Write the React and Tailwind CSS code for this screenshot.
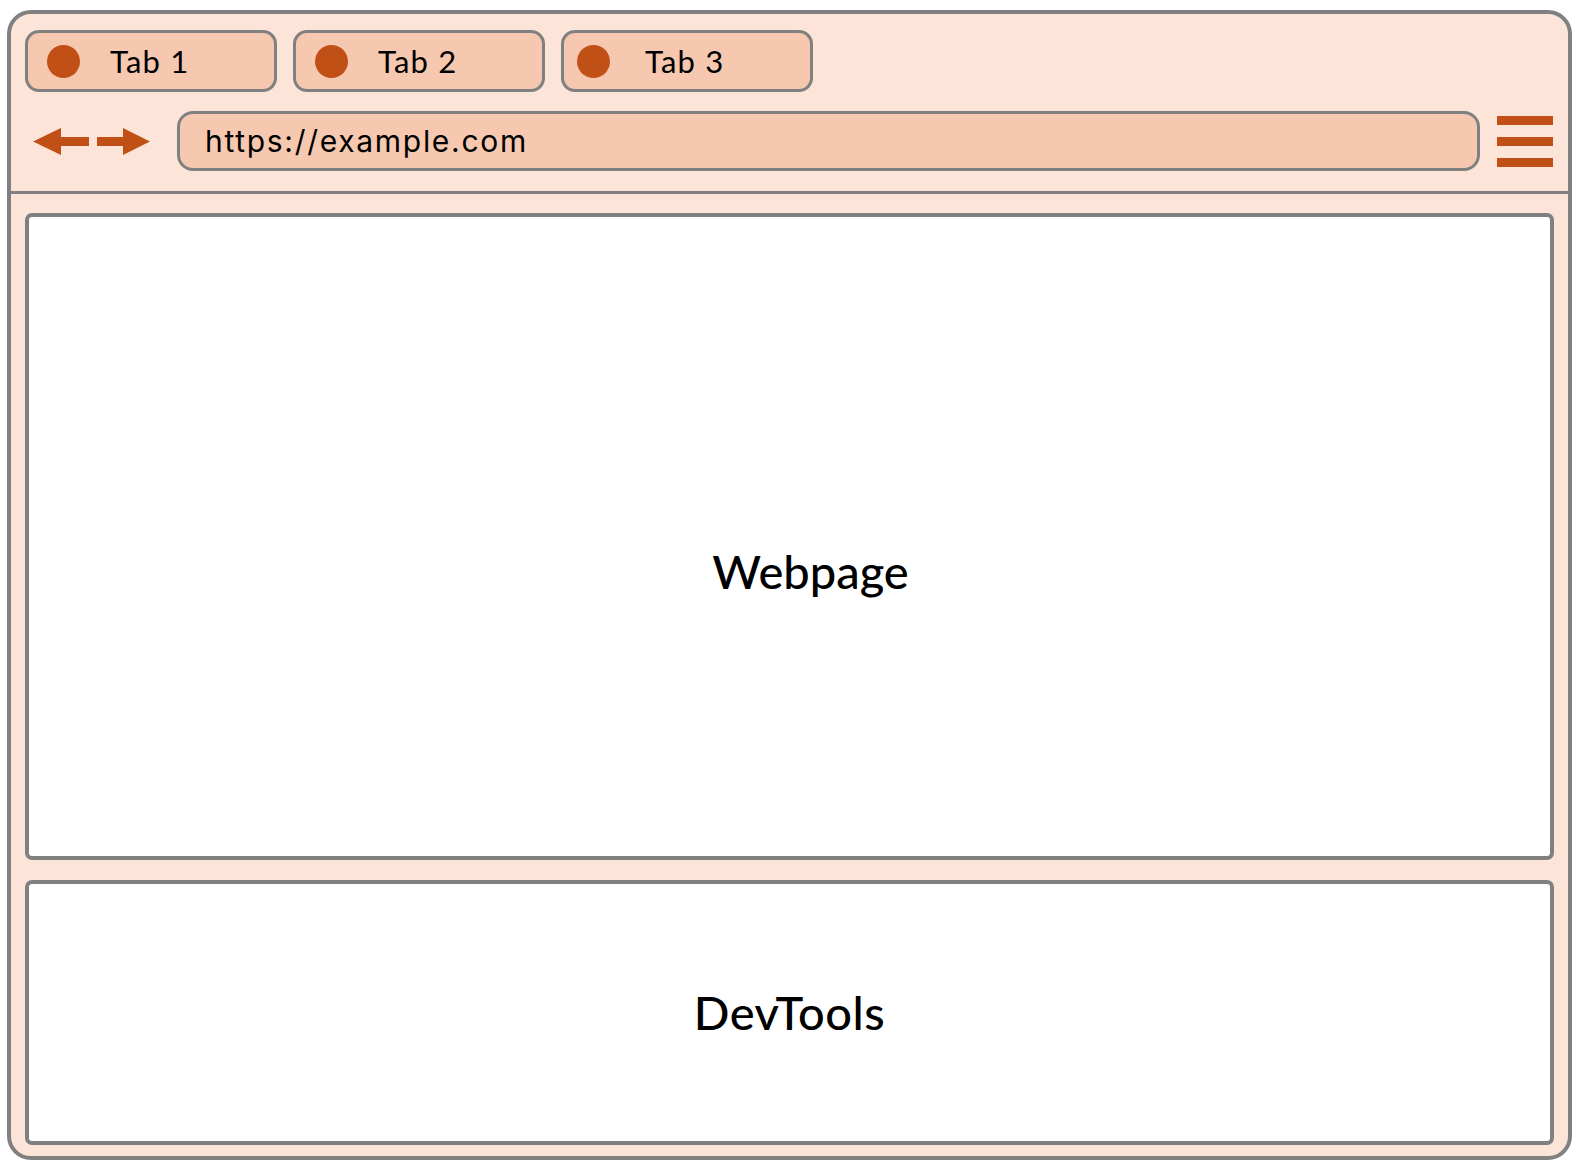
import React from "react";

function Tab({ label, circlePad, textGap }) {
  return (
    <div
      className="w-[252px] h-[62px] shrink-0 rounded-[14px] border-[3px] border-[#808080] bg-[#f6c8af] flex items-center"
      style={{ paddingLeft: circlePad }}
    >
      <div className="w-[33px] h-[33px] rounded-full bg-[#c15016] shrink-0" />
      <span
        className="text-[31px] leading-none text-black tracking-[1.2px]"
        style={{ marginLeft: textGap, fontFamily: "Lato, 'Noto Sans', sans-serif" }}
      >
        {label}
      </span>
    </div>
  );
}

export default function App() {
  return (
    <div className="w-[1580px] h-[1168px] bg-white overflow-hidden">
      <div className="ml-[7px] mt-[10px] w-[1565px] h-[1150px] rounded-[24px] border-[4px] border-[#808080] bg-[#fde4d8] flex flex-col overflow-hidden">
        {/* header */}
        <div className="pt-[16px] pb-[20px] px-[14px] border-b-[3px] border-[#808080] flex flex-col">
          <div className="flex gap-[16px]">
            <Tab label="Tab 1" circlePad={19} textGap={30} />
            <Tab label="Tab 2" circlePad={19} textGap={30} />
            <Tab label="Tab 3" circlePad={13} textGap={35} />
          </div>
          <div className="mt-[19px] flex items-center h-[60px]">
            <svg className="ml-[8px] shrink-0" width="118" height="29" viewBox="0 0 118 29">
              <polygon points="0,14.5 28,1 28,10 56,10 56,19 28,19 28,28" fill="#c15016" />
              <polygon points="64,10 90,10 90,1 117,14.5 90,28 90,19 64,19" fill="#c15016" />
            </svg>
            <div className="ml-[26px] flex-1 h-[60px] rounded-[16px] border-[3px] border-[#808080] bg-[#f6c8af] flex items-center pl-[25px]">
              <span
                className="text-[30px] leading-none text-black tracking-[1.7px]"
                style={{ fontFamily: "Inter, 'Noto Sans', sans-serif" }}
              >
                https://example.com
              </span>
            </div>
            <div className="ml-[17px] mr-[1px] w-[56px] flex flex-col gap-[12px] shrink-0">
              <div className="h-[9px] bg-[#c15016]" />
              <div className="h-[9px] bg-[#c15016]" />
              <div className="h-[9px] bg-[#c15016]" />
            </div>
          </div>
        </div>
        {/* content */}
        <div className="pt-[19px] px-[14px] flex flex-col gap-[20px]">
          <div className="h-[647px] rounded-[7px] border-[4px] border-[#808080] bg-white flex items-center justify-center pt-[70px] pl-[42px]">
            <span
              className="text-[47px] leading-none text-black font-medium"
              style={{ fontFamily: "Lato, 'Noto Sans', sans-serif" }}
            >
              Webpage
            </span>
          </div>
          <div className="h-[265px] rounded-[7px] border-[4px] border-[#808080] bg-white flex items-center justify-center">
            <span
              className="text-[47px] leading-none text-black font-medium tracking-[0.5px]"
              style={{ fontFamily: "Lato, 'Noto Sans', sans-serif" }}
            >
              DevTools
            </span>
          </div>
        </div>
      </div>
    </div>
  );
}
